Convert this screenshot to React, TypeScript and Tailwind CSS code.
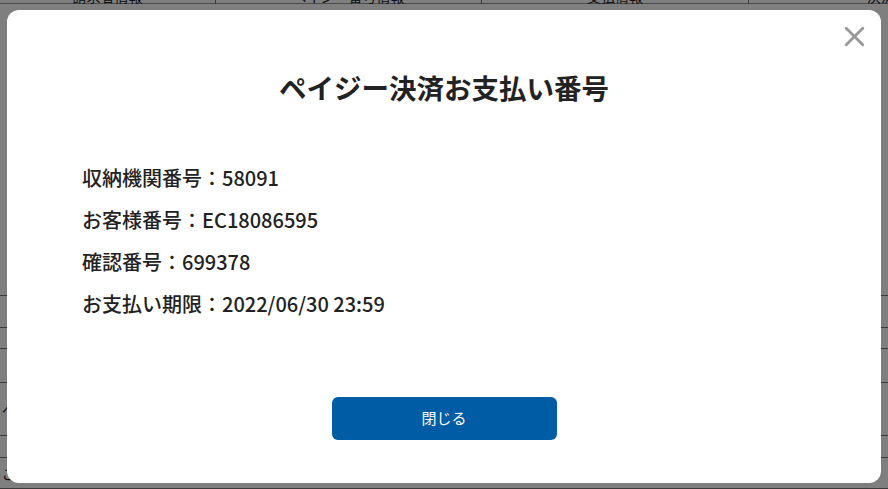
import { X } from "lucide-react";

const rows = [
  { h: 32, label: "" },
  { h: 21, label: "" },
  { h: 34, label: "" },
  { h: 53, label: "ペイジー" },
  { h: 22, label: "" },
  { h: 31, label: "ご利用金額" },
  { h: 40, label: "お支払い方法" },
];

export default function App() {
  return (
    <div className="relative w-[888px] h-[489px] overflow-hidden bg-white font-['Noto_Sans_CJK_JP','Noto_Sans',sans-serif]">
      {/* underlying page */}
      <div className="-mt-[12px] text-[14px] text-[#222]">
        <div className="grid grid-cols-[215px_266px_267px_1fr] h-[16px] border-b border-[#999] whitespace-nowrap">
          <div className="text-center leading-[16px]">請求者情報</div>
          <div className="text-center leading-[16px] border-l border-[#777]">ペイジー番号情報</div>
          <div className="text-center leading-[16px] border-l border-[#777]">支払情報</div>
          <div className="pl-[118px] leading-[16px] border-l border-[#777] overflow-hidden">決済情報</div>
        </div>
        <div className="h-[291px]" />
        {rows.map((r, i) => (
          <div key={i} style={{ height: r.h }} className="border-t border-[#777] flex items-center pl-[2px]">
            {r.label}
          </div>
        ))}
        <div className="border-t border-[#777] pt-[4px] pl-[30px] leading-[16px]">ペイジー決済</div>
      </div>

      {/* overlay */}
      <div className="absolute inset-0 bg-black/50 pt-[10px] pl-[7px]">
        <div className="relative w-[874px] h-[473px] rounded-[12px] bg-white flex flex-col text-[#222]">
          <button className="absolute right-[10px] top-[10px] text-[#999]">
            <X size={33} strokeWidth={2.1} />
          </button>
          <h2 className="mt-[62px] text-center text-[27.5px] font-bold leading-[30px] text-[#222]">
            ペイジー決済お支払い番号
          </h2>
          <ul className="mt-[55px] pl-[75px] text-[20px] font-medium leading-[42px]">
            <li>収納機関番号：58091</li>
            <li>お客様番号：EC18086595</li>
            <li>確認番号：699378</li>
            <li>お支払い期限：2022/06/30 23:59</li>
          </ul>
          <button className="mt-[72px] mx-auto w-[225px] h-[43px] rounded-[6px] bg-[#005ca4] text-white text-[15px]">
            閉じる
          </button>
        </div>
      </div>
    </div>
  );
}
